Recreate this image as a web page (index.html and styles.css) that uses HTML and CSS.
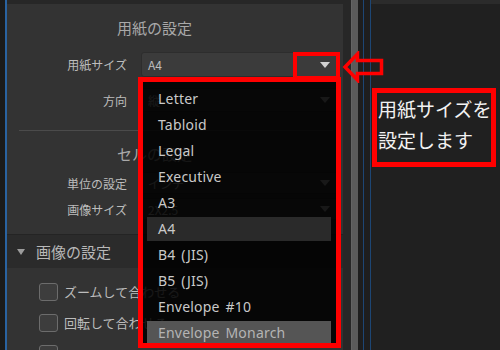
FILE: index.html
```html
<!DOCTYPE html>
<html lang="ja">
<head>
<meta charset="utf-8">
<title>用紙の設定</title>
<link rel="stylesheet" href="styles.css">
</head>
<body>
<div class="app">
  <div class="edge"></div>
  <div class="edge-line"></div>
  <div class="panel">
    <div class="topband"></div>
    <div class="group">
      <div class="group-title">用紙の設定</div>
      <div class="field f1"><span class="label">用紙サイズ</span><div class="select big"><span class="val">A4</span><i class="caret light"></i></div></div>
      <div class="field f2"><span class="label">方向</span><div class="select"><span class="val">縦</span><i class="caret"></i></div></div>
    </div>
    <div class="sep"></div>
    <div class="group g2">
      <div class="group-title">セルの設定</div>
      <div class="field f3"><span class="label">単位の設定</span><div class="select small"><span class="val">インチ</span><i class="caret"></i></div></div>
      <div class="field f4"><span class="label">画像サイズ</span><div class="select small"><span class="val">2X2.5</span><i class="caret"></i></div></div>
    </div>
    <div class="section-head"><i class="tri"></i><span>画像の設定</span></div>
    <div class="checks">
      <div class="check"><span class="box"></span><span>ズームして合わせる</span></div>
      <div class="check"><span class="box"></span><span>回転して合わせる</span></div>
      <div class="check"><span class="box"></span></div>
    </div>
  </div>
  <div class="gutter"></div>
  <div class="scrollbar"></div>
  <div class="rail"></div>
  <div class="vline"></div>
  <div class="rail r2"></div>
  <div class="vline"></div>
  <div class="right">
    <div class="topband lighter"></div>
    <div class="note">用紙サイズを<br>設定します</div>
  </div>

  <div class="hl-box"></div>
  <svg class="arrow" width="42" height="32" viewBox="0 0 42 32">
    <polygon points="3,16 15.5,3 15.5,9.5 39.5,9.5 39.5,22.5 15.5,22.5 15.5,29" fill="none" stroke="#ff0000" stroke-width="3.5" stroke-linejoin="miter"/>
  </svg>
  <div class="dropdown">
    <ul class="options">
      <li>Letter</li>
      <li>Tabloid</li>
      <li>Legal</li>
      <li>Executive</li>
      <li>A3</li>
      <li class="current">A4</li>
      <li>B4 (JIS)</li>
      <li>B5 (JIS)</li>
      <li>Envelope #10</li>
      <li class="hover">Envelope Monarch</li>
    </ul>
  </div>
</div>
</body>
</html>
```
FILE: styles.css
```css
* { box-sizing: border-box; margin: 0; padding: 0; }
html, body { width: 500px; height: 350px; overflow: hidden; background: #202020; }
body { font-family: "Noto Sans CJK JP", "Noto Sans", sans-serif; }

.app {
  position: relative;
  display: flex;
  width: 500px;
  height: 350px;
  overflow: hidden;
}

.edge { width: 5px; background: #1b1b1b; }
.edge-line { width: 2px; background: #2a63a1; }

.panel {
  width: 336px;
  background: #333333;
  display: flex;
  flex-direction: column;
  overflow: hidden;
}
.topband { height: 4px; background: #272727; flex: none; }
.topband.lighter { background: #2b2b2b; }

.group-title {
  font-size: 15px;
  line-height: 20px;
  color: #a9a9a9;
  padding-left: 110px;
  margin-top: 14px;
}
.g2 .group-title { margin-top: 13px; }

.field {
  display: flex;
  align-items: center;
  gap: 14px;
}
.label {
  width: 120px;
  text-align: right;
  font-size: 12px;
  color: #bdbdbd;
}
.select {
  width: 199px;
  height: 24px;
  background: #3b3b3b;
  border: 1px solid #2d2d2d;
  border-radius: 3px;
  display: flex;
  align-items: center;
  justify-content: space-between;
  padding: 0 9px 0 6px;
  font-size: 12px;
  color: #bdbdbd;
}
.select.big { height: 25px; }
.select.small { height: 22px; }
.f1 { margin-top: 14px; }
.f2 { margin-top: 11px; }
.f3 { margin-top: 8px; }
.f4 { margin-top: 4px; }

.caret {
  width: 0; height: 0;
  border-left: 5px solid transparent;
  border-right: 5px solid transparent;
  border-top: 6px solid #bbbbbb;
}
.caret.light { border-top-color: #d2d2d2; }

.sep {
  height: 1px;
  background: #4b4b4b;
  margin: 18px 10px 0 12px;
  flex: none;
}

.section-head {
  margin-top: 14px;
  border-top: 1px solid #242424;
  height: 34px;
  background: #2b2b2b;
  display: flex;
  align-items: center;
  padding-left: 10px;
  gap: 11px;
  font-size: 15px;
  color: #b8b8b8;
  flex: none;
}
.tri {
  width: 0; height: 0;
  border-left: 4.5px solid transparent;
  border-right: 4.5px solid transparent;
  border-top: 6px solid #9c9c9c;
}

.checks { margin-top: 8px; }
.check {
  height: 31px;
  display: flex;
  align-items: center;
  gap: 6px;
  padding-left: 32px;
  font-size: 13px;
  color: #bcbcbc;
  white-space: nowrap;
}
.box {
  width: 19px;
  height: 18px;
  border: 1.5px solid #6c6c6c;
  background: #3d3d3d;
  border-radius: 3px;
  flex: none;
}

.gutter { width: 8px; background: #272727; }
.scrollbar { width: 7px; background: #5b5b5b; border-left: 1px solid #646464; }
.rail { width: 5px; background: #1e1e1e; }
.rail.r2 { width: 6px; }
.vline { width: 1px; background: #1d4674; }

.right {
  flex: 1;
  background: #202020;
}
.note {
  margin: 84px 0 0 1px;
  width: 124px;
  border: 5px solid #ff0000;
  padding: 0 0 7px 1px;
  font-size: 19px;
  line-height: 31px;
  color: #f2f2f2;
  white-space: nowrap;
}

/* overlays */
.hl-box {
  position: absolute;
  left: 293px;
  top: 52px;
  width: 47px;
  height: 28px;
  border: 4px solid #ff0000;
}
.arrow {
  position: absolute;
  left: 342px;
  top: 51px;
}
.dropdown {
  position: absolute;
  left: 138px;
  top: 77px;
  width: 203px;
  height: 271px;
  border: 5px solid #ff0000;
  background: rgba(0, 0, 0, 0.87);
  overflow: hidden;
  padding: 5px 5px 0 4px;
}
.options {
  list-style: none;
  font-family: "Noto Sans", sans-serif;
  font-size: 14px;
  letter-spacing: 0.2px;
  word-spacing: 2px;
  color: #c9c9c9;
}
.options li {
  height: 24px;
  line-height: 24px;
  margin-bottom: 2px;
  padding-left: 11px;
  white-space: nowrap;
}
.options li.current { background: #2a2a2a; }
.options li.hover { background: #555555; color: #b4b4b4; }
```
